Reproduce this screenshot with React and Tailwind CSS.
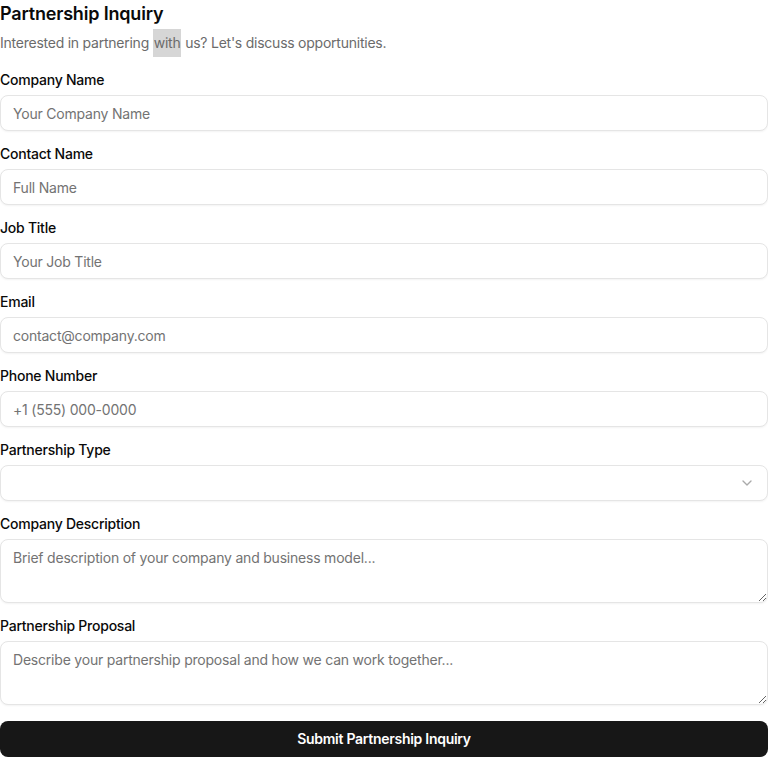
import { ChevronDown } from "lucide-react";

const fields = [
    { label: "Company Name", placeholder: "Your Company Name" },
    { label: "Contact Name", placeholder: "Full Name" },
    { label: "Job Title", placeholder: "Your Job Title" },
    { label: "Email", placeholder: "contact@company.com" },
    { label: "Phone Number", placeholder: "+1 (555) 000-0000" },
];

const inputCls =
    "h-9 w-full rounded-lg border border-[#e5e5e5] bg-white px-3 text-sm tracking-[-0.015em] text-neutral-900 shadow-xs outline-none placeholder:text-[#737373]";

const areaCls =
    "h-16 w-full rounded-lg border border-[#e5e5e5] bg-white px-3 py-2 text-sm tracking-[-0.015em] text-neutral-900 shadow-xs outline-none placeholder:text-[#737373]";

function Label({ children }) {
    return <label className="block text-sm font-medium leading-none text-neutral-950">{children}</label>;
}

export default function App() {
    return (
        <div className="min-h-screen bg-white font-['Inter',sans-serif] tracking-[-0.015em] text-neutral-950">
            <h1 className="text-lg font-semibold leading-7 tracking-[-0.01em]">Partnership Inquiry</h1>
            <p className="mt-px text-sm leading-7 text-[#6b6b6b]">
                Interested in partnering <span className="inline-block bg-[#d6d6d6] px-px">with</span> us? Let's discuss opportunities.
            </p>

            <form className="mt-4 flex flex-col gap-4" onSubmit={(e) => e.preventDefault()}>
                {fields.map((f) => (
                    <div key={f.label} className="flex flex-col gap-2">
                        <Label>{f.label}</Label>
                        <input className={inputCls} placeholder={f.placeholder} />
                    </div>
                ))}

                <div className="flex flex-col gap-2">
                    <Label>Partnership Type</Label>
                    <button
                        type="button"
                        className="flex h-9 w-full items-center justify-between rounded-lg border border-[#e5e5e5] bg-white px-3 shadow-xs"
                    >
                        <span />
                        <ChevronDown className="h-4 w-4 text-neutral-500 opacity-60" />
                    </button>
                </div>

                <div className="flex flex-col gap-2">
                    <Label>Company Description</Label>
                    <textarea className={areaCls} placeholder="Brief description of your company and business model..." />
                </div>

                <div className="flex flex-col gap-2">
                    <Label>Partnership Proposal</Label>
                    <textarea
                        className={areaCls}
                        placeholder="Describe your partnership proposal and how we can work together..."
                    />
                </div>

                <button
                    type="submit"
                    className="h-9 w-full rounded-lg bg-[#171717] text-sm font-semibold tracking-[-0.02em] text-white"
                >
                    Submit Partnership Inquiry
                </button>
            </form>
        </div>
    );
}
